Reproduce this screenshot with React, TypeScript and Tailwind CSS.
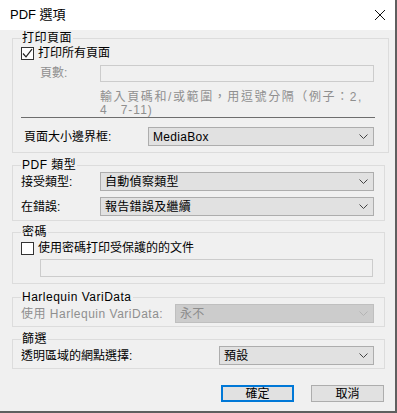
import type { ReactNode } from 'react';

const font = "font-['Liberation_Sans','Noto_Sans_CJK_TC',sans-serif]";

function Chevron({ disabled }: { disabled?: boolean }) {
  return (
    <svg width="9" height="5" viewBox="0 0 9 5" className="shrink-0">
      <polyline
        points="0.5,0.5 4.5,4.5 8.5,0.5"
        fill="none"
        stroke={disabled ? '#b4b4b4' : '#444444'}
        strokeWidth="1"
      />
    </svg>
  );
}

function Select({ value, width, disabled }: { value: string; width: string; disabled?: boolean }) {
  return (
    <div
      className={`${width} h-[19px] flex items-center justify-between pl-[4px] pr-[5px] border ${
        disabled ? 'bg-[#cccccc] border-[#bfbfbf] text-[#8d8d8d]' : 'bg-[#e1e1e1] border-[#adadad] text-black'
      }`}
    >
      <span className="leading-[14px] tracking-[0.3px]">{value}</span>
      <Chevron disabled={disabled} />
    </div>
  );
}

function Checkbox({ checked, label }: { checked?: boolean; label: string }) {
  return (
    <div className="h-[14px] flex items-center gap-[4px]">
      <div className="w-[13px] h-[13px] border border-[#333333] bg-white flex items-center justify-center">
        {checked && (
          <svg width="11" height="11" viewBox="0 0 11 11">
            <polyline points="1,5.5 4,8.8 10,1.2" fill="none" stroke="#222222" strokeWidth="1.2" />
          </svg>
        )}
      </div>
      <span className="leading-[14px]">{label}</span>
    </div>
  );
}

function GroupBox({ title, className, children }: { title: string; className: string; children: ReactNode }) {
  return (
    <fieldset className={`w-[373px] border border-[#dcdcdc] px-[8px] ${className}`}>
      <legend className="px-[1px] leading-[14px] tracking-[0.5px] text-black">{title}</legend>
      {children}
    </fieldset>
  );
}

export default function App() {
  return (
    <div className={`${font} w-[397px] h-[413px] border-r-2 border-b-2 border-[#5f5f5f] bg-[#f0f0f0] text-[12px] text-black`}>
      <div className="h-[30px] bg-white flex items-center justify-between pl-[10px] pr-[8px]">
        <span className="text-[13px]">PDF 選項</span>
        <svg width="12" height="12" viewBox="0 0 12 12" className="mr-[1px]">
          <path d="M1 1 L11 11 M11 1 L1 11" stroke="#111111" strokeWidth="1" />
        </svg>
      </div>

      <div className="pl-[12px]">
        <GroupBox title="打印頁面" className="mt-[1px] pb-[6px]">
          <div className="mt-[1px]">
            <Checkbox checked label="打印所有頁面" />
          </div>
          <div className="mt-[4px] flex items-center">
            <span className="ml-[19px] w-[60px] text-[#8f8f8f]">頁數:</span>
            <div className="w-[274px] h-[17px] border border-[#cccccc] bg-[#f0f0f0]" />
          </div>
          <div className="mt-[9px] ml-[79px] w-[280px] leading-[12px] tracking-[1.6px] text-[#8f8f8f]">
            <div>輸入頁碼和/或範圍，用逗號分隔（例子：2,</div>
            <div className="mt-[1px] tracking-[1px]">4&nbsp;&nbsp;&nbsp;7-11)</div>
          </div>
          <div className="mt-[1px] w-[354px] h-px bg-[#6d6d6d]" />
          <div className="mt-[9px] flex items-center">
            <span className="ml-[3px] w-[124px]">頁面大小邊界框:</span>
            <Select value="MediaBox" width="w-[226px]" />
          </div>
        </GroupBox>

        <GroupBox title="PDF 類型" className="mt-[5px] pb-[4px]">
          <div className="flex items-center">
            <span className="w-[79px]">接受類型:</span>
            <Select value="自動偵察類型" width="w-[274px]" />
          </div>
          <div className="mt-[6px] flex items-center">
            <span className="w-[79px]">在錯誤:</span>
            <Select value="報告錯誤及繼續" width="w-[274px]" />
          </div>
        </GroupBox>

        <GroupBox title="密碼" className="mt-[4px] pb-[6px]">
          <div className="mt-[2px]">
            <Checkbox label="使用密碼打印受保護的的文件" />
          </div>
          <div className="mt-[4px] ml-[19px] w-[333px] h-[18px] border border-[#cccccc] bg-[#f0f0f0]" />
        </GroupBox>

        <GroupBox title="Harlequin VariData" className="mt-[6px] pb-[3px]">
          <div className="flex items-center">
            <span className="w-[154px] tracking-[0.5px] text-[#8f8f8f]">使用 Harlequin VariData:</span>
            <Select value="永不" width="w-[199px]" disabled />
          </div>
        </GroupBox>

        <GroupBox title="篩選" className="mt-[5px] pb-[3px]">
          <div className="flex items-center">
            <span className="w-[198px]">透明區域的網點選擇:</span>
            <Select value="預設" width="w-[155px]" />
          </div>
        </GroupBox>

        <div className="mt-[16px] w-[373px] flex justify-end gap-[17px] pr-[1px]">
          <button className="w-[73px] h-[17px] border-2 border-[#0078d7] bg-[#e1e1e1] flex items-center justify-center leading-[12px]">
            確定
          </button>
          <button className="w-[73px] h-[17px] border border-[#adadad] bg-[#e1e1e1] flex items-center justify-center leading-[12px]">
            取消
          </button>
        </div>
      </div>
    </div>
  );
}
